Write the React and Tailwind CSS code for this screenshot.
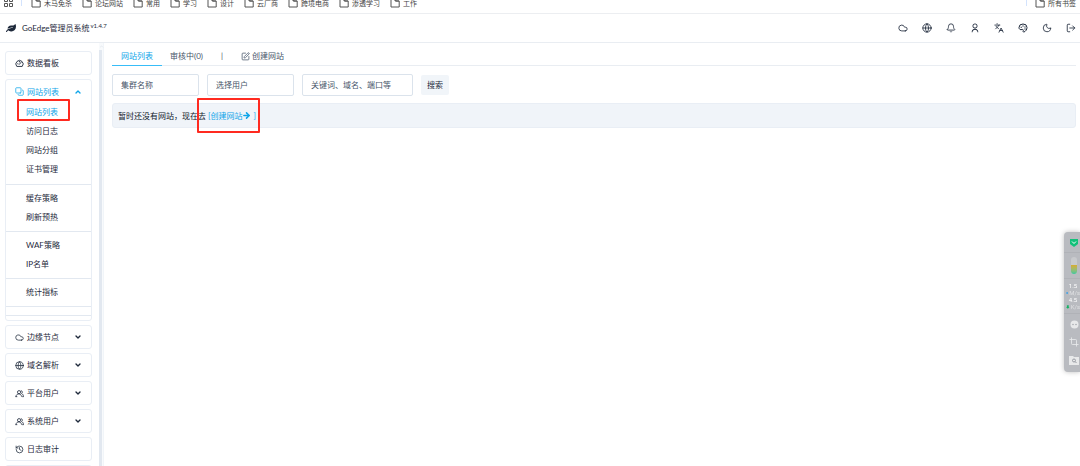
import {
  ArrowRight,
  Bell,
  ChevronDown,
  ChevronUp,
  Cloud,
  Copy,
  Crop,
  Globe,
  History,
  Languages,
  LogOut,
  Moon,
  SquarePen,
} from "lucide-react";
import { FaLeaf } from "react-icons/fa";
import { RiUserLine } from "react-icons/ri";

const bookmarks = [
  { title: "木马免杀" },
  { title: "论坛网站" },
  { title: "常用" },
  { title: "学习" },
  { title: "设计" },
  { title: "云厂商" },
  { title: "跨境电商" },
  { title: "渗透学习" },
  { title: "工作" },
];

const siteMenu = [
  ["网站列表", "访问日志", "网站分组", "证书管理"],
  ["缓存策略", "刷新预热"],
  ["WAF策略", "IP名单"],
  ["统计指标"],
];

const GaugeIcon = ({ className }) => (
  <svg viewBox="0 0 20 20" className={className} fill="none" stroke="currentColor" strokeWidth="2">
    <path d="M4 16.5a8 8 0 1 1 12 0z" strokeLinejoin="round" />
    <path d="m9.5 12 4-4.5M6 10.500h.5M10 5.500v1" strokeLinecap="round" />
  </svg>
);

const UsersIcon = ({ className }) => (
  <svg viewBox="0 0 20 20" className={className} fill="none" stroke="currentColor" strokeWidth="1.8">
    <circle cx="9" cy="7" r="3.500" />
    <path d="M2 17c.5-4 3-6 6.500-6s5.500 2 6 6M1 17h4M13 3.500a3.500 3.500 0 0 1 1.500 6.500c2.500 1 4 3.500 4.500 7h-3" />
  </svg>
);

const PersonIcon = ({ className }) => <RiUserLine className={className} />;

const PaletteIcon = ({ className }) => (
  <svg viewBox="0 0 20 20" className={className} fill="none" stroke="currentColor" strokeWidth="2">
    <path d="M2 9a8 7 0 0 1 16 0c0 4-3 8-6 9-2 .5-2-1-1.500-2.500.5-2-.5-3-2.500-2.500C5 14 2 13 2 9z" />
    <path d="M6 8.500h1M9.500 6h1M13.500 8h1M13.500 12h1" strokeLinecap="round" />
  </svg>
);

const FolderIcon = () => (
  <svg viewBox="0 0 10 10" className="size-[10px] shrink-0" fill="none" stroke="#555" strokeWidth="1">
    <path d="M1 1h4l1 2h3.2v6H1z" />
    <path d="M5 1v2h4" />
  </svg>
);

const modules = [
  { title: "边缘节点", Icon: Cloud, expandable: true },
  { title: "域名解析", Icon: Globe, expandable: true },
  { title: "平台用户", Icon: UsersIcon, expandable: true },
  { title: "系统用户", Icon: UsersIcon, expandable: true },
  { title: "日志审计", Icon: History, expandable: false },
];

const actions = [
  { label: "云服务", Icon: Cloud },
  { label: "节点", Icon: Globe },
  { label: "消息", Icon: Bell },
  { label: "个人资料", Icon: PersonIcon },
  { label: "语言", Icon: Languages },
  { label: "主题", Icon: PaletteIcon },
  { label: "夜间模式", Icon: Moon },
  { label: "退出", Icon: LogOut },
];

const Bookmarks = () => (
  <nav className="flex h-[14px] items-start overflow-hidden border-b border-[#eceef1] pl-1 text-[7px] text-[#444]">
    <svg viewBox="0 0 9 9" className="-mt-0.5 size-[9px]" fill="none" stroke="#555">
      <path d="M.5.5h3v3h-3zM5.5.5h3v3h-3zM.5 5.5h3v3h-3zM5.5 5.5h3v3h-3z" />
    </svg>
    <span className="ml-2 h-[6px] w-px bg-[#d3e3fd]" />
    <ul className="ml-[9px] flex gap-[10px]">
      {bookmarks.map((item) => (
        <li key={item.title}>
          <a href="#" className="flex h-[6px] items-center gap-[3px] leading-[6px]">
            <FolderIcon />
            {item.title}
          </a>
        </li>
      ))}
    </ul>
    <a
      href="#"
      className="ml-auto flex h-[6px] items-center gap-[3px] border-l border-[#d3e3fd] pr-1 pl-2 leading-[6px]"
    >
      <FolderIcon />
      所有书签
    </a>
  </nav>
);

const Header = () => (
  <header className="flex h-[29px] items-center border-b border-[#e9edf2] px-[6px]">
    <FaLeaf className="h-2 w-[10px]" preserveAspectRatio="none" />
    <h1 className="ml-[6px] text-[8px]">GoEdge管理员系统</h1>
    <span className="mb-[5px] ml-px text-[6px]">v1.4.7</span>
    <div className="-mr-[2px] ml-auto flex gap-[14px]">
      {actions.map(({ label, Icon }) => (
        <button key={label} type="button" aria-label={label} className="size-[10px]">
          <Icon className="size-[10px]" />
        </button>
      ))}
    </div>
  </header>
);

const SiteGroup = () => (
  <section className="rounded-[3px] border border-[#e9eef5] pb-1">
    <button type="button" className="flex h-[23px] w-full items-center px-[9px] text-[#0ea5e9]">
      <Copy className="size-[9px] -scale-100" />
      <span className="ml-[3px]">网站列表</span>
      <ChevronUp className="ml-auto size-2" strokeWidth={4} />
    </button>
    {siteMenu.map((group, idx) => (
      <ul key={group[0]} className={`border-b border-[#e2e8f0] ${idx === 0 ? "pb-[5px]" : "py-1"}`}>
        {group.map((title) => (
          <li key={title} className="relative">
            <a
              href="#"
              className={`block pl-5 leading-[19px] ${title === "网站列表" ? "text-[#0ea5e9]" : ""}`}
            >
              {title}
            </a>
            {title === "网站列表" && (
              <span className="absolute -top-[4px] left-[11px] h-[22px] w-[53px] rounded-[1px] border-2 border-[#ff2a20]" />
            )}
          </li>
        ))}
      </ul>
    ))}
    <div className="h-[9px] border-b border-[#e2e8f0]" />
  </section>
);

const Sidebar = () => (
  <aside className="flex w-[104px] shrink-0 overflow-hidden">
    <nav className="flex min-w-0 flex-1 flex-col gap-1 pt-2 pr-[7px] pl-[5px]">
      <a href="#" className="flex h-6 shrink-0 items-center rounded-[3px] border border-[#e9eef5] px-[9px]">
        <GaugeIcon className="size-[9px]" />
        <span className="ml-[3px]">数据看板</span>
      </a>
      <SiteGroup />
      {modules.map(({ title, Icon, expandable }) => (
        <button
          key={title}
          type="button"
          className="flex h-6 shrink-0 items-center rounded-[3px] border border-[#e9eef5] px-[9px]"
        >
          <Icon className="size-[9px]" />
          <span className="ml-[3px]">{title}</span>
          {expandable && <ChevronDown className="ml-auto size-2" strokeWidth={4} />}
        </button>
      ))}
      <div className="h-6 shrink-0 rounded-[3px] border border-[#e9eef5]" />
    </nav>
    <div className="flex w-[5px] flex-col border-r border-[#f1f5f9] bg-[#f8fafc]">
      <ChevronUp className="h-[7px] w-[5px] text-[#cbd5e1]" />
      <div className="w-[3px] flex-1 bg-[#e2e8f0]" />
    </div>
  </aside>
);

const Tabs = () => (
  <nav className="flex h-[23px] border-b border-[#e9edf2] text-[#475569]">
    <a href="#" className="-mb-px flex items-center border-b border-[#38bdf8] px-[9px] pt-1 text-[#0ea5e9]">
      网站列表
    </a>
    <a href="#" className="flex items-center px-2 pt-1">
      审核中(0)
    </a>
    <span className="flex items-center px-[10px] pt-1">|</span>
    <a href="#" className="flex items-center gap-[2px] px-2 pt-1">
      <SquarePen className="size-[9px]" />
      创建网站
    </a>
  </nav>
);

const SearchForm = () => {
  const field =
    "h-[22px] rounded-[2px] border border-[#dbe3ec] bg-white px-2 text-[8px] placeholder:text-[#475569] placeholder:opacity-100";

  return (
    <form className="mt-2 flex items-center gap-2">
      <input type="text" aria-label="集群名称" placeholder="集群名称" className={`${field} w-[87px]`} />
      <input type="text" aria-label="选择用户" placeholder="选择用户" className={`${field} w-[87px]`} />
      <input
        type="text"
        aria-label="关键词"
        placeholder="关键词、域名、端口等"
        className={`${field} w-[111px]`}
      />
      <button type="button" className="h-5 rounded-[2px] bg-[#f1f5f9] px-[6px]">
        搜索
      </button>
    </form>
  );
};

const EmptyMessage = () => (
  <div className="mt-[7px] flex h-[25px] items-center gap-[2px] rounded-[3px] border border-[#e9eef5] bg-[#f0f4f9] px-[5px] text-[#0f172a]">
    <span>暂时还没有网站，现在去</span>
    <a href="#" className="relative flex items-center text-[#0ea5e9]">
      [创建网站
      <ArrowRight className="size-[9px]" strokeWidth={4} />
      <span className="ml-0.5">]</span>
      <span className="absolute -top-[12px] -left-[11px] h-[35px] w-[63px] rounded-[1px] border-2 border-[#ff2a20]" />
    </a>
  </div>
);

const Speed = ({ value, unit, down }) => (
  <div>
    <div className="text-center">{value}</div>
    <div className="flex items-center justify-center gap-px text-[#dfe0e2]">
      <svg viewBox="0 0 4 4" className={`size-1 ${down ? "rotate-180 text-[#16b364]" : "text-[#239bf0]"}`}>
        <path d="M2 0l2 2H3v2H1V2H0z" fill="currentColor" />
      </svg>
      {unit}
    </div>
  </div>
);

const SystemWidget = () => (
  <aside className="fixed top-[232px] right-0 flex h-[140px] w-4 flex-col items-center rounded-l-[4px] bg-[#b9bbc0] font-['Roboto',sans-serif] text-[6px] text-white shadow-[0_0_5px_rgba(0,0,0,0.25)]">
    <div className="flex h-[21px] w-full items-center justify-center border-b border-[#b0b2b7] pl-1">
      <svg viewBox="0 0 8 9" className="h-[9px] w-2">
        <path d="M0 1h8v5L4 9 0 6z" fill="#12c17a" />
        <path d="m2 3.500 2 2 2-2" stroke="#fff" fill="none" />
      </svg>
    </div>
    <div className="flex h-[26px] w-full items-center justify-center border-b border-[#b0b2b7] pl-1">
      <div className="flex h-[17px] w-[6px] items-end overflow-hidden rounded-full bg-[#c8cacd]">
        <div className="h-[9px] w-full bg-linear-to-b from-[#d6ac2b] to-[#30c79b]" />
      </div>
    </div>
    <div className="flex h-[35px] w-full flex-col justify-center border-b border-[#b0b2b7] pl-[2px] leading-[7px]">
      <Speed value="1.5" unit="M/s" />
      <Speed value="4.5" unit="K/s" down />
    </div>
    <div className="flex flex-1 flex-col items-center justify-around pt-0.5 pb-[3px] pl-1 text-[#e8e9ea]">
      <svg viewBox="0 0 9 9" className="size-[9px]">
        <circle cx="4.5" cy="4.5" r="4" fill="currentColor" />
        <circle cx="3" cy="4.5" r=".7" fill="#999ca3" />
        <circle cx="6" cy="4.5" r=".7" fill="#999ca3" />
      </svg>
      <Crop className="size-[10px]" />
      <svg viewBox="0 0 10 9" className="h-[9px] w-[10px]">
        <path d="M0 0h4l1 1h5v8H0z" fill="currentColor" />
        <circle cx="5" cy="4.5" r="1.5" fill="none" stroke="#999ca3" />
        <path d="m6 5.500 1.500 1.500" stroke="#999ca3" />
      </svg>
    </div>
  </aside>
);

const App = () => {
  return (
    <div className="flex h-screen flex-col overflow-hidden bg-white font-['Lato','Noto_Sans_CJK_SC',sans-serif] text-[8px] text-[#1e293b]">
      <Bookmarks />
      <Header />
      <div className="flex min-h-0 flex-1">
        <Sidebar />
        <main className="min-w-0 flex-1 pr-1 pl-2">
          <Tabs />
          <SearchForm />
          <EmptyMessage />
        </main>
      </div>
      <SystemWidget />
    </div>
  );
};

export default App;
